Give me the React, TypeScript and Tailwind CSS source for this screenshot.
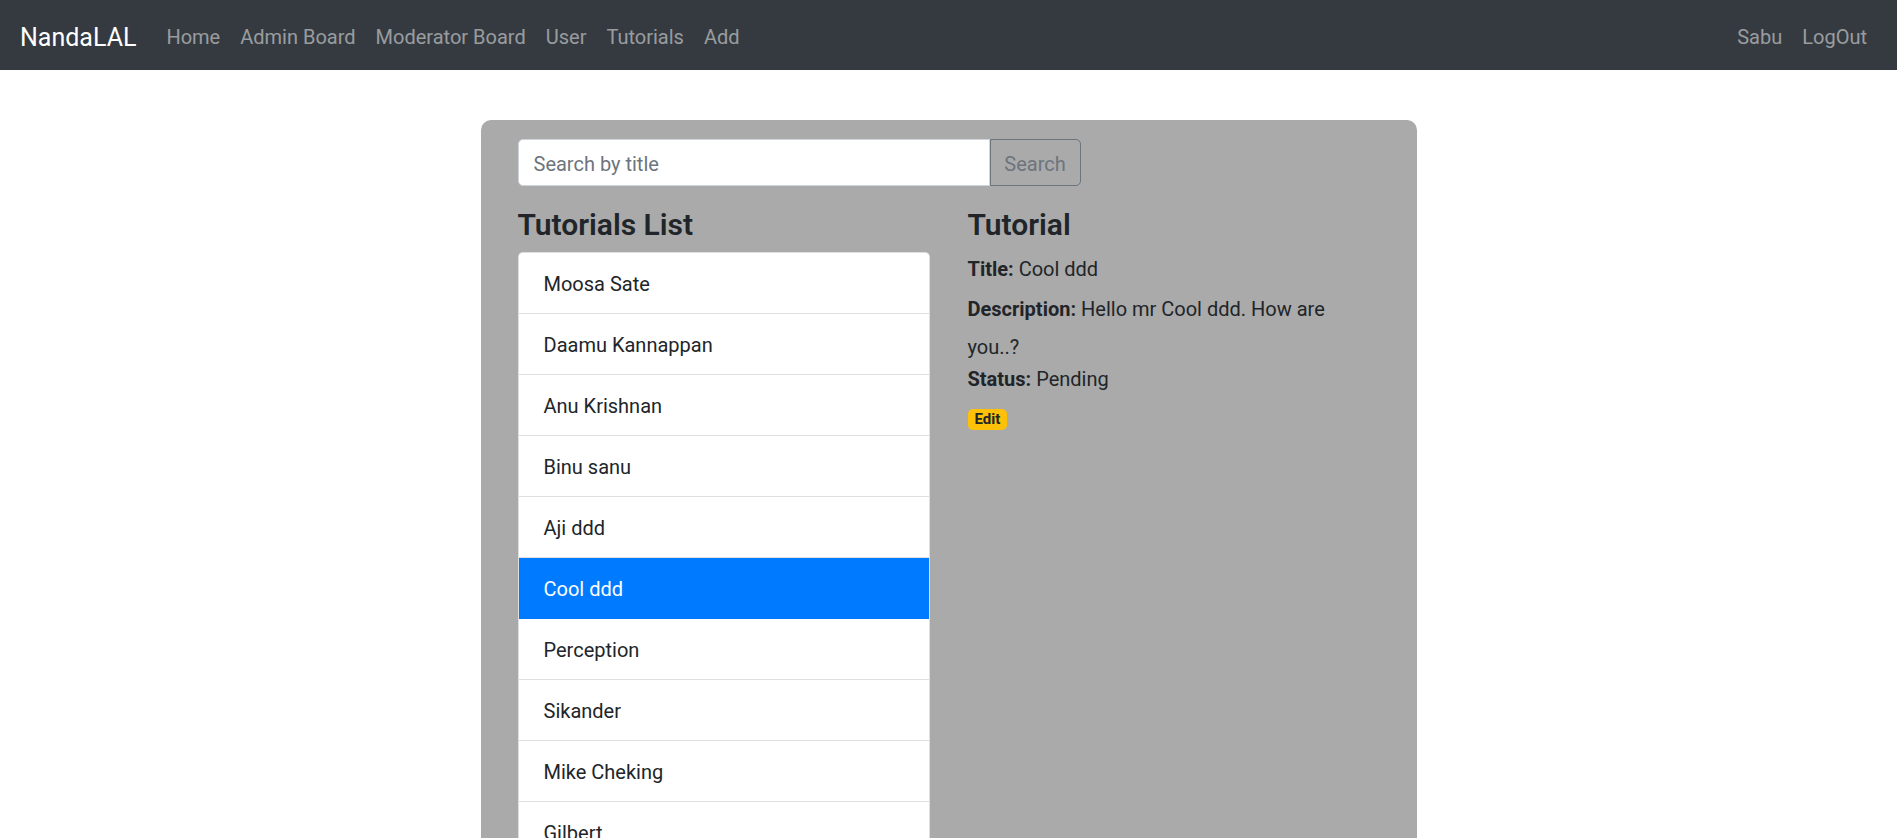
import React from 'react';

const tutorials = [
  'Moosa Sate',
  'Daamu Kannappan',
  'Anu Krishnan',
  'Binu sanu',
  'Aji ddd',
  'Cool ddd',
  'Perception',
  'Sikander',
  'Mike Cheking',
  'Gilbert',
];

const navLinks = ['Home', 'Admin Board', 'Moderator Board', 'User', 'Tutorials', 'Add'];

function NavBar() {
  return (
    <nav className="flex h-[70px] items-center bg-[#343a40] px-5 pt-[4px] text-[20px] leading-[30px]">
      <a className="mr-5 text-[25px] leading-[37px] text-white">NandaLAL</a>
      <div className="flex">
        {navLinks.map((l) => (
          <a key={l} className="px-[10px] text-white/50">
            {l}
          </a>
        ))}
      </div>
      <div className="ml-auto flex">
        <a className="px-[10px] text-white/50">Sabu</a>
        <a className="px-[10px] text-white/50">LogOut</a>
      </div>
    </nav>
  );
}

// label is inline-block with a bottom margin, which makes the first line taller (Bootstrap look)
function Field({ label, children }: { label: string; children: React.ReactNode }) {
  return (
    <div className="pt-[2px]">
      <label className="mb-[8px] inline-block font-bold">{label}</label> {children}
    </div>
  );
}

export default function App() {
  const current = 'Cool ddd';
  return (
    <div className="min-h-screen bg-white font-['Roboto',sans-serif] text-[20px] leading-[30px] text-[#212529]">
      <NavBar />
      <div className="mx-auto mt-[50px] w-[936px] rounded-[10px] bg-[#aaaaaa] px-[37px] pb-10 pt-[19px]">
        <div className="mb-5 flex h-[47px] w-[563px]">
          <input
            className="min-w-0 flex-1 rounded-l-[5px] border border-[#ced4da] bg-white px-[15px] pt-[2px] text-[20px] text-[#495057] outline-none placeholder:text-[#6c757d]"
            placeholder="Search by title"
          />
          <button className="w-[91px] rounded-r-[5px] border border-[#6c757d] pt-[2px] text-[20px] text-[#6c757d]">
            Search
          </button>
        </div>
        <div className="flex gap-[38px]">
          <div className="w-[412px]">
            <h4 className="mb-[10px] h-[36px] pt-[2px] text-[30px] font-semibold leading-[34px]">
              Tutorials List
            </h4>
            <ul className="overflow-hidden rounded-[5px] border border-black/[0.125] bg-white">
              {tutorials.map((t) => (
                <li
                  key={t}
                  className={
                    t === current
                      ? 'border-b border-[#007bff] bg-[#007bff] px-[25px] pb-[14px] pt-[16px] text-white'
                      : 'border-b border-black/[0.125] px-[25px] pb-[14px] pt-[16px] last:border-b-0'
                  }
                >
                  {t}
                </li>
              ))}
            </ul>
          </div>
          <div className="w-[400px]">
            <h4 className="mb-[10px] h-[36px] pt-[2px] text-[30px] font-semibold leading-[34px]">
              Tutorial
            </h4>
            <Field label="Title:">Cool ddd</Field>
            <Field label="Description:">Hello mr Cool ddd. How are you..?</Field>
            <Field label="Status:">Pending</Field>
            <a className="mt-[2px] inline-block rounded-[5px] bg-[#ffc107] px-[7px] py-[3px] text-[15px] font-bold leading-[15px] text-[#212529]">
              Edit
            </a>
          </div>
        </div>
      </div>
    </div>
  );
}
